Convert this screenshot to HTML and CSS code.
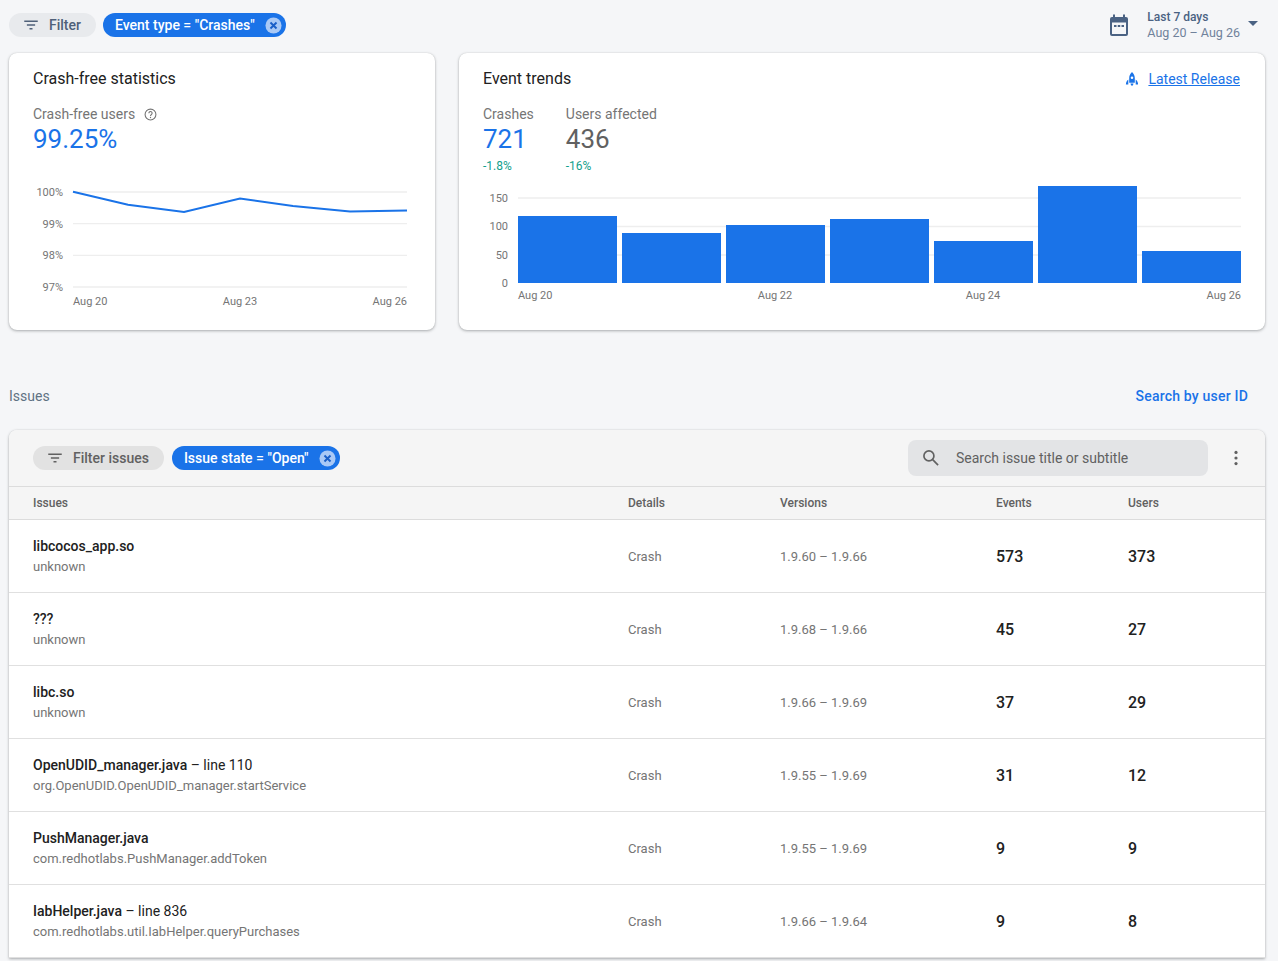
FILE: index.html
```html
<!DOCTYPE html>
<html lang="en">
<head>
<meta charset="utf-8">
<title>Crashlytics</title>
<link rel="stylesheet" href="styles.css">
</head>
<body>
<header class="topbar">
  <div class="chip chip-plain"><svg class="chip-icon" viewBox="0 0 24 24"><path d="M3 6h18v2H3zM6.5 11h11v2h-11zM10 16h4v2h-4z"/></svg>Filter</div>
  <div class="chip chip-active">Event type = "Crashes"<svg class="chip-x" viewBox="0 0 18 18"><circle cx="9" cy="9" r="8.5"/><path d="M5.8 5.8l6.4 6.4M12.2 5.8l-6.4 6.4"/></svg></div>
  <div class="date">
    <svg class="date-icon" viewBox="0 0 24 24"><path d="M19 4h-1V1.500h-2V4H8V1.500H6V4H5a2 2 0 0 0-2 2v15a2 2 0 0 0 2 2h14a2 2 0 0 0 2-2V6a2 2 0 0 0-2-2zm0 17H5V9.500h14zM7 12h2.500v2H7zm3.750 0h2.500v2h-2.500zm3.750 0H17v2h-2.500z"/></svg>
    <div class="date-text"><div class="date-main">Last 7 days</div><div class="date-sub">Aug 20 – Aug 26</div></div>
    <div class="caret"></div>
  </div>
</header>

<section class="cards">
  <article class="card card-crash">
    <h2 class="card-title">Crash-free statistics</h2>
    <div class="metric-label">Crash-free users <svg class="help" viewBox="0 0 24 24"><circle cx="12" cy="12" r="10" /><path d="M9 9.500a3 3 0 1 1 4.700 2.500c-1.100.8-1.700 1.300-1.700 2.700"/><circle class="dot" cx="12" cy="17.500" r="1.200"/></svg></div>
    <div class="metric-value blue">99.25%</div>
    <svg class="chart chart-line" viewBox="9 170 426 150" width="426" height="150">
      <g class="grid"><path d="M73 194H407M73 225.700H407M73 257.300H407M73 289H407"/></g>
      <g class="tick tick-y">
        <text x="63" y="198">100%</text><text x="63" y="230">99%</text><text x="63" y="261">98%</text><text x="63" y="293">97%</text>
      </g>
      <polyline class="line" points="73,193.800 128,206.800 184,214 240,200.500 293,208 350,213.500 407,212.500"/>
      <g class="tick">
        <text x="73" y="307">Aug 20</text><text x="240" y="307" text-anchor="middle">Aug 23</text><text x="407" y="307" text-anchor="end">Aug 26</text>
      </g>
    </svg>
  </article>

  <article class="card card-trend">
    <div class="trend-head">
      <h2 class="card-title">Event trends</h2>
      <a class="release"><svg class="rocket" viewBox="0 0 16 16"><path d="M8 1c2 1.700 2.800 4 2.800 6.200v4.600H5.200V7.200C5.200 5 6 2.700 8 1zm0 4.500A1.300 1.300 0 1 0 8 8.100a1.300 1.300 0 0 0 0-2.600zM4.300 8.600v5H1.900c0-2 .8-3.800 2.400-5zm7.400 0c1.600 1.200 2.400 3 2.400 5h-2.400zM6.500 12.600h3l-.6 2H7.100z"/></svg><span>Latest Release</span></a>
    </div>
    <div class="metrics">
      <div class="metric">
        <div class="metric-label">Crashes</div>
        <div class="metric-value blue">721</div>
        <div class="delta">-1.8%</div>
      </div>
      <div class="metric">
        <div class="metric-label">Users affected</div>
        <div class="metric-value grey">436</div>
        <div class="delta">-16%</div>
      </div>
    </div>
    <svg class="chart chart-bars" viewBox="459 186 806 130" width="806" height="130">
      <g class="grid"><path d="M518 206H1241M518 234.500H1241M518 263H1241"/></g>
      <g class="tick tick-y">
        <text x="508" y="210">150</text><text x="508" y="238">100</text><text x="508" y="267">50</text><text x="508" y="295">0</text>
      </g>
      <g class="bars">
        <rect x="518" y="224" width="99" height="67"/>
        <rect x="622" y="241" width="99" height="50"/>
        <rect x="726" y="233" width="99" height="58"/>
        <rect x="830" y="227" width="99" height="64"/>
        <rect x="934" y="249" width="99" height="42"/>
        <rect x="1038" y="194" width="99" height="97"/>
        <rect x="1142" y="259" width="99" height="32"/>
      </g>
      <g class="tick">
        <text x="518" y="307">Aug 20</text><text x="775" y="307" text-anchor="middle">Aug 22</text><text x="983" y="307" text-anchor="middle">Aug 24</text><text x="1241" y="307" text-anchor="end">Aug 26</text>
      </g>
    </svg>
  </article>
</section>

<section class="issues-head">
  <div class="issues-label">Issues</div>
  <a class="user-search">Search by user ID</a>
</section>

<section class="table">
  <div class="toolbar">
    <div class="chip chip-grey"><svg class="chip-icon" viewBox="0 0 24 24"><path d="M3 6h18v2H3zM6.500 11h11v2h-11zM10 16h4v2h-4z"/></svg>Filter issues</div>
    <div class="chip chip-active">Issue state = "Open"<svg class="chip-x" viewBox="0 0 18 18"><circle cx="9" cy="9" r="8.500"/><path d="M5.800 5.800l6.400 6.400M12.200 5.800l-6.400 6.400"/></svg></div>
    <div class="search"><svg class="search-icon" viewBox="0 0 24 24"><circle cx="9.500" cy="9.500" r="6"/><path d="M14 14l6.500 6.500"/></svg><span>Search issue title or subtitle</span></div>
    <svg class="more" viewBox="0 0 4 20"><circle cx="2" cy="3" r="2"/><circle cx="2" cy="10" r="2"/><circle cx="2" cy="17" r="2"/></svg>
  </div>
  <div class="row row-head"><div>Issues</div><div>Details</div><div>Versions</div><div>Events</div><div>Users</div></div>

  <div class="row">
    <div><div class="issue-title"><b>libcocos_app.so</b></div><div class="issue-sub">unknown</div></div>
    <div class="cell">Crash</div><div class="cell">1.9.60 – 1.9.66</div><div class="num">573</div><div class="num">373</div>
  </div>
  <div class="row">
    <div><div class="issue-title"><b>???</b></div><div class="issue-sub">unknown</div></div>
    <div class="cell">Crash</div><div class="cell">1.9.68 – 1.9.66</div><div class="num">45</div><div class="num">27</div>
  </div>
  <div class="row">
    <div><div class="issue-title"><b>libc.so</b></div><div class="issue-sub">unknown</div></div>
    <div class="cell">Crash</div><div class="cell">1.9.66 – 1.9.69</div><div class="num">37</div><div class="num">29</div>
  </div>
  <div class="row">
    <div><div class="issue-title"><b>OpenUDID_manager.java</b> – line 110</div><div class="issue-sub">org.OpenUDID.OpenUDID_manager.startService</div></div>
    <div class="cell">Crash</div><div class="cell">1.9.55 – 1.9.69</div><div class="num">31</div><div class="num">12</div>
  </div>
  <div class="row">
    <div><div class="issue-title"><b>PushManager.java</b></div><div class="issue-sub">com.redhotlabs.PushManager.addToken</div></div>
    <div class="cell">Crash</div><div class="cell">1.9.55 – 1.9.69</div><div class="num">9</div><div class="num">9</div>
  </div>
  <div class="row">
    <div><div class="issue-title"><b>IabHelper.java</b> – line 836</div><div class="issue-sub">com.redhotlabs.util.IabHelper.queryPurchases</div></div>
    <div class="cell">Crash</div><div class="cell">1.9.66 – 1.9.64</div><div class="num">9</div><div class="num">8</div>
  </div>
</section>
</body>
</html>
```

FILE: styles.css
```css
* { box-sizing: border-box; }
html, body { height: 961px; overflow: hidden; }
body {
  margin: 0;
  padding: 0 13px 0 9px;
  background: #f5f6f8;
  font-family: Roboto, "Liberation Sans", sans-serif;
  color: #212121;
  font-size: 14px;
}
.topbar { display: flex; align-items: center; gap: 7px; height: 53px; padding-top: 0; padding-bottom: 3px; }
.chip {
  display: flex; align-items: center; height: 24px; border-radius: 12px;
  font-size: 14px; white-space: nowrap;
}
.chip-plain { background: #e8eaed; color: #4f6079; padding: 0 15px 0 13px; font-weight: 500; }
.chip-grey { background: #e2e2e2; color: #616161; padding: 0 15px 0 13px; font-weight: 500; }
.chip-icon { width: 18px; height: 18px; margin-right: 9px; fill: currentColor; }
.chip-plain .chip-icon { fill: #4f6079; }
.chip-active { background: #1a73e8; color: #fff; padding: 0 4px 0 12px; font-weight: 500; }
.chip-x { width: 17px; height: 17px; margin-left: 10px; }
.chip-x circle { fill: #a9c9f6; }
.chip-x path { stroke: #1a5fc8; stroke-width: 2; fill: none; }
.date { margin-left: auto; display: flex; align-items: center; padding-right: 7px; }
.date-icon { width: 24px; height: 24px; fill: #4a6283; margin-right: 16px; }
.date-text { font-size: 12px; line-height: 15.500px; }
.date-main { color: #4a6283; font-weight: 500; }
.date-sub { color: #70829b; font-size: 12.500px; }
.caret {
  width: 0; height: 0; margin-left: 8px; margin-top: -4px;
  border-left: 5px solid transparent; border-right: 5px solid transparent; border-top: 5px solid #4a6283;
}

.cards { display: flex; gap: 24px; }
.card {
  height: 277px; background: #fff; border-radius: 8px;
  box-shadow: 0 1px 3px rgba(60, 64, 67, .4), 0 0 1px rgba(60, 64, 67, .2);
  padding: 16px 0 0 24px; position: relative; overflow: hidden;
}
.card-crash { width: 426px; }
.card-trend { width: 806px; }
.card-title { margin: 0; font-size: 16px; font-weight: 400; line-height: 19px; color: #212121; }
.metric-label { margin-top: 18px; color: #757575; font-size: 14px; line-height: 17px; display: flex; align-items: center; white-space: pre; }
.help { width: 13px; height: 13px; margin-left: 5px; fill: none; stroke: #757575; stroke-width: 2; }
.help .dot { fill: #757575; stroke: none; }
.metric-value { font-size: 26px; line-height: 30px; margin-top: 1px; }
.blue { color: #1a73e8; }
.grey { color: #616161; }
.chart { display: block; margin-left: -24px; overflow: visible; }
.chart-line { margin-top: 14px; }
.trend-head { display: flex; justify-content: space-between; padding-right: 25px; }
.release { display: flex; align-items: center; color: #1a73e8; text-decoration: underline; font-size: 14px; }
.rocket { width: 16px; height: 16px; fill: #1a73e8; margin-right: 8px; }
.metrics { display: flex; gap: 32px; }
.delta { font-size: 12px; line-height: 14px; color: #12a08c; margin-top: 5px; }
.chart-bars { margin-top: 5px; }
.grid path { stroke: #eeeeee; stroke-width: 1.300; fill: none; }
.tick text { font-family: Roboto, "Liberation Sans", sans-serif; font-size: 11px; fill: #757575; }
.tick-y text { text-anchor: end; }
.line { fill: none; stroke: #1a73e8; stroke-width: 2; }
.bars rect { fill: #1a73e8; }

.issues-head { display: flex; justify-content: space-between; align-items: center; height: 20px; margin-top: 56px; padding-right: 17px; }
.issues-label { color: #5f7283; font-size: 14px; }
.user-search { color: #1a73e8; font-weight: 500; font-size: 14px; letter-spacing: .2px; }

.table {
  margin-top: 24px; border-radius: 8px 8px 0 0; background: #fff; width: 1256px;
  box-shadow: 0 1px 3px rgba(60, 64, 67, .4), 0 0 1px rgba(60, 64, 67, .2);
}
.toolbar {
  display: flex; align-items: center; height: 57px; padding: 0 0 0 24px; gap: 8px;
  background: #f5f5f5; border-radius: 8px 8px 0 0; border-bottom: 1px solid #dcdcdc;
}
.search {
  display: flex; align-items: center; width: 300px; height: 36px; margin-left: auto;
  background: #e3e4e6; border-radius: 8px; color: #616161; font-size: 14px; padding-left: 13px;
}
.search-icon { width: 20px; height: 20px; margin-right: 15px; fill: none; stroke: #616161; stroke-width: 2; }
.more { width: 4px; height: 16px; margin: 0 27px 0 18px; fill: #616161; }
.row {
  display: grid; grid-template-columns: 595px 152px 216px 132px 1fr;
  align-items: center; height: 73px; padding-left: 24px; border-bottom: 1px solid #e0e0e0; background: #fff;
}
.row-head { height: 33px; background: #f5f5f5; color: #616161; font-size: 12px; font-weight: 500; border-bottom-color: #dcdcdc; }
.issue-title { font-size: 14px; line-height: 20px; color: #212121; }
.issue-title b { font-weight: 500; }
.issue-sub { font-size: 13px; line-height: 20px; margin-top: 1px; color: #757575; }
.cell { font-size: 13px; color: #757575; }
.num { font-size: 16px; font-weight: 500; color: #212121; }
```
